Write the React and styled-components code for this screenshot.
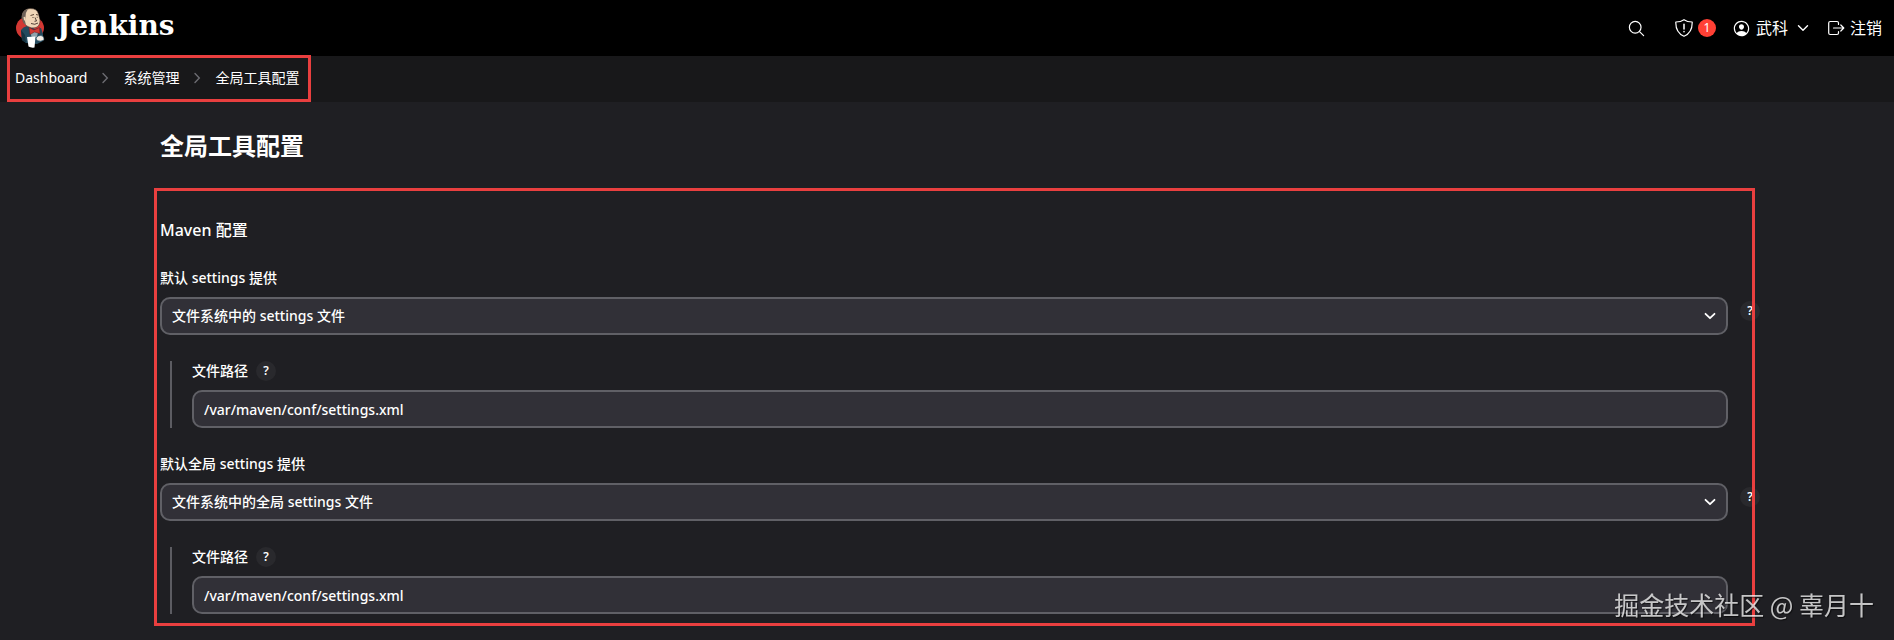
import React, { useState } from "react";
import styled, { createGlobalStyle } from "styled-components";
import { IoSearchOutline, IoPersonCircleOutline } from "react-icons/io5";

const GlobalStyle = createGlobalStyle`
  *, *::before, *::after {
    box-sizing: border-box;
  }
  body {
    margin: 0;
    min-height: 100vh;
    background: #1f1f23;
    color: #fff;
    font-family: "Noto Sans", "Noto Sans CJK SC", sans-serif;
    font-size: 14px;
    line-height: 20px;
  }
  a {
    color: inherit;
    text-decoration: none;
  }
  button, input, select {
    font: inherit;
    color: inherit;
  }
`;

const Header = styled.header`
  display: flex;
  align-items: center;
  justify-content: space-between;
  height: 56px;
  padding: 0 12px 0 16px;
  background: #000;
`;

const Brand = styled.a`
  display: flex;
  align-items: center;
  gap: 12px;
  svg {
    width: 29px;
    height: 40px;
  }
  span {
    font-family: "DejaVu Serif", serif;
    font-weight: bold;
    font-size: 28px;
    line-height: 32px;
    padding-bottom: 4px;
  }
`;

const Tools = styled.div`
  display: flex;
  align-items: center;
  font-size: 16px;
`;

const IconButton = styled.button`
  display: flex;
  align-items: center;
  gap: 5px;
  padding: 0;
  margin-right: ${(props) => props.$space}px;
  border: none;
  background: none;
  cursor: pointer;
  span + svg {
    margin-left: 4px;
  }
`;

const ToolLink = styled.a`
  display: flex;
  align-items: center;
  gap: 5px;
`;

const Badge = styled.span`
  width: 18px;
  height: 18px;
  border-radius: 50%;
  background: #ff4035;
  font-size: 12px;
  line-height: 18px;
  text-align: center;
`;

const BreadcrumbBar = styled.nav`
  display: flex;
  height: 46px;
  padding-left: 15px;
  background: #18181a;
`;

const Breadcrumbs = styled.ol`
  position: relative;
  display: flex;
  align-items: center;
  gap: 14px;
  margin: 0;
  padding: 0 0 2px;
  list-style: none;
  li {
    display: flex;
    align-items: center;
    gap: 14px;
  }
`;

const Frame = styled.div`
  position: absolute;
  inset: ${(props) => props.$inset};
  border: 3px solid #e93f3f;
  pointer-events: none;
`;

const Main = styled.main`
  padding: 26px 166px 26px 160px;
`;

const Title = styled.h1`
  margin: 0 0 54px;
  font-size: 24px;
  font-weight: bold;
  line-height: 36px;
`;

const Section = styled.section`
  position: relative;
`;

const SectionTitle = styled.h2`
  margin: 0 0 26px;
  font-size: 16px;
  font-weight: 500;
  line-height: 24px;
`;

const Group = styled.div`
  display: flex;
  flex-direction: column;
  gap: 26px;
`;

const Field = styled.div`
  display: flex;
  flex-direction: column;
  gap: 9px;
  font-weight: 500;
`;

const SubField = styled(Field)`
  margin-left: 10px;
  padding-left: 20px;
  border-left: 2px solid #5c5c62;
`;

const LabelRow = styled.div`
  display: flex;
  align-items: center;
  gap: 8px;
`;

const ControlRow = styled.div`
  position: relative;
  display: flex;
  > svg {
    position: absolute;
    right: 12px;
    top: 13px;
    pointer-events: none;
  }
`;

const Help = styled.button`
  width: 20px;
  height: 20px;
  padding: 0;
  border: none;
  border-radius: 50%;
  background: #29292d;
  font-size: 12px;
  font-weight: 600;
  line-height: 20px;
  cursor: pointer;
`;

const SideHelp = styled(Help)`
  position: absolute;
  left: calc(100% + 12px);
  top: 4px;
`;

const Select = styled.select`
  appearance: none;
  width: 100%;
  height: 38px;
  padding: 0 36px 0 10px;
  border: 2px solid #606066;
  border-radius: 10px;
  background: #313037;
`;

const Input = styled.input`
  width: 100%;
  height: 38px;
  padding: 0 10px;
  border: 2px solid #606066;
  border-radius: 10px;
  background: #313037;
`;

const Watermark = styled.div`
  position: fixed;
  right: 20px;
  bottom: 18px;
  color: rgba(255, 255, 255, 0.75);
  font-family: "Noto Sans CJK SC", sans-serif;
  font-size: 25px;
  line-height: 36px;
  text-shadow: 1px 1px 1px rgba(0, 0, 0, 0.6);
  pointer-events: none;
`;

function Butler() {
  return (
    <svg viewBox="0 0 29 40" aria-hidden="true">
      <ellipse cx="14" cy="20" rx="14" ry="12" fill="#d33833" />
      <path d="M5 22 Q7 19 11 18 L19 21 L25 20 L27 26 L27 33 L21 36 L10 35 L6 32Z" fill="#234a5e" />
      <path d="M5 22 L9 27 L10 35 L6 32Z" fill="#16323f" />
      <path d="M6 8 Q7 1 14 .6 Q21 .4 22.5 6 L24 12 Q24 18 20 19.5 Q15 21 11 18 Q8 16 7 13Z" fill="#f0d6b7" stroke="#3a2b22" strokeWidth="0.5" />
      <path d="M7 4 Q9 1.5 12 1 Q9 5 9.5 9 L9 13 L10 17 Q7 15 6.5 12 Q4.5 9 7 4Z" fill="#6f6259" />
      <path d="M7.5 9 Q9.5 8 9.5 11 Q9.5 13 8 12.5Z" fill="#f0d6b7" />
      <path d="M14.5 7.5 L18 6.5 M20 6.5 L22 7" fill="none" stroke="#4b3527" strokeWidth="0.9" />
      <path d="M16.5 9.5 h1 M20.8 9.3 h.8 M19 9.5 l1.5 3.5 l-2 .3 M15 15.5 q4 1.8 7 -.5" fill="none" stroke="#2b1d16" strokeWidth="0.8" />
      <path d="M14 24 L22 24 L21 29 L16 30Z" fill="#8fa3ad" />
      <path d="M13 19.5 L18 22 L23.5 19.5 L24 25.5 L18.5 24 L14 26.5Z" fill="#d33833" stroke="#701c1a" strokeWidth="0.5" />
      <path d="M11 29 L19.5 28.5 L18.5 39.5 Q15 40 12.5 38.5Z" fill="#fff" />
      <path d="M20 30 Q22 27 25 27.5 Q28.5 28 28 32 Q25 34 21 32.5Z" fill="#f4ece4" stroke="#234a5e" strokeWidth="0.6" />
    </svg>
  );
}

function Shield() {
  return (
    <svg width="18" height="18" viewBox="0 0 18 18" fill="none" stroke="#fff" strokeWidth="1.2" strokeLinejoin="round" strokeLinecap="round" aria-hidden="true">
      <path d="M9 .7 C7 2.2 4 3 .8 3 C.6 10 2.8 14.6 9 17.3 C15.2 14.6 17.4 10 17.2 3 C14 3 11 2.2 9 .7Z" />
      <path d="M9 5.2 V10 M9 12.6 V12.7" strokeWidth="1.5" />
    </svg>
  );
}

function Logout() {
  return (
    <svg width="18" height="18" viewBox="0 0 18 18" fill="none" stroke="#fff" strokeWidth="1.2" strokeLinejoin="round" strokeLinecap="round" aria-hidden="true">
      <path d="M11.5 5.5 V4 Q11.5 2.5 10 2.5 H3.2 Q1.7 2.5 1.7 4 V14 Q1.7 15.5 3.2 15.5 H10 Q11.5 15.5 11.5 14 V12.5" />
      <path d="M6.5 9 H16.5 M13.8 6 L16.8 9 L13.8 12" />
    </svg>
  );
}

function Chevron({ width = 1.8 }) {
  return (
    <svg width="12" height="12" viewBox="0 0 12 12" fill="none" stroke="#fff" strokeWidth={width} strokeLinecap="round" strokeLinejoin="round" aria-hidden="true">
      <path d="M1.5 3.8 L6 8.2 L10.5 3.8" />
    </svg>
  );
}

function Separator() {
  return (
    <svg width="8" height="12" viewBox="0 0 8 12" fill="none" stroke="#6c6c72" strokeWidth="1.4" strokeLinecap="round" aria-hidden="true">
      <path d="M2 1.5 L6.3 6 L2 10.5" />
    </svg>
  );
}

const settings = [
  { id: "settings", label: "默认 settings 提供", option: "文件系统中的 settings 文件" },
  { id: "global", label: "默认全局 settings 提供", option: "文件系统中的全局 settings 文件" },
];

function Provider({ id, label, option }) {
  const [path, setPath] = useState("/var/maven/conf/settings.xml");
  return (
    <>
      <Field>
        <LabelRow>
          <label htmlFor={id}>{label}</label>
        </LabelRow>
        <ControlRow>
          <Select id={id}>
            <option>{option}</option>
          </Select>
          <Chevron />
          <SideHelp type="button">?</SideHelp>
        </ControlRow>
      </Field>
      <SubField>
        <LabelRow>
          <label htmlFor={`${id}-path`}>文件路径</label>
          <Help type="button">?</Help>
        </LabelRow>
        <Input id={`${id}-path`} value={path} onChange={(e) => setPath(e.target.value)} />
      </SubField>
    </>
  );
}

export default function App() {
  return (
    <>
      <GlobalStyle />
      <Header>
        <Brand href="#">
          <Butler />
          <span>Jenkins</span>
        </Brand>
        <Tools>
          <IconButton type="button" $space={29}>
            <IoSearchOutline size={19} />
          </IconButton>
          <IconButton type="button" $space={16}>
            <Shield />
            <Badge>1</Badge>
          </IconButton>
          <IconButton type="button" $space={18}>
            <IoPersonCircleOutline size={19} />
            <span>武科</span>
            <Chevron width={1.4} />
          </IconButton>
          <ToolLink href="#">
            <Logout />
            <span>注销</span>
          </ToolLink>
        </Tools>
      </Header>
      <BreadcrumbBar>
        <Breadcrumbs>
          <li>
            <a href="#">Dashboard</a>
            <Separator />
          </li>
          <li>
            <a href="#">系统管理</a>
            <Separator />
          </li>
          <li>
            <a href="#">全局工具配置</a>
          </li>
          <Frame as="li" $inset="-1px -12px 0 -8px" />
        </Breadcrumbs>
      </BreadcrumbBar>
      <Main>
        <Title>全局工具配置</Title>
        <Section>
          <SectionTitle>Maven 配置</SectionTitle>
          <Group>
            {settings.map((item) => (
              <Provider key={item.id} {...item} />
            ))}
          </Group>
          <Frame $inset="-30px -27px -12px -6px" />
        </Section>
      </Main>
      <Watermark>掘金技术社区 @ 辜月十</Watermark>
    </>
  );
}
